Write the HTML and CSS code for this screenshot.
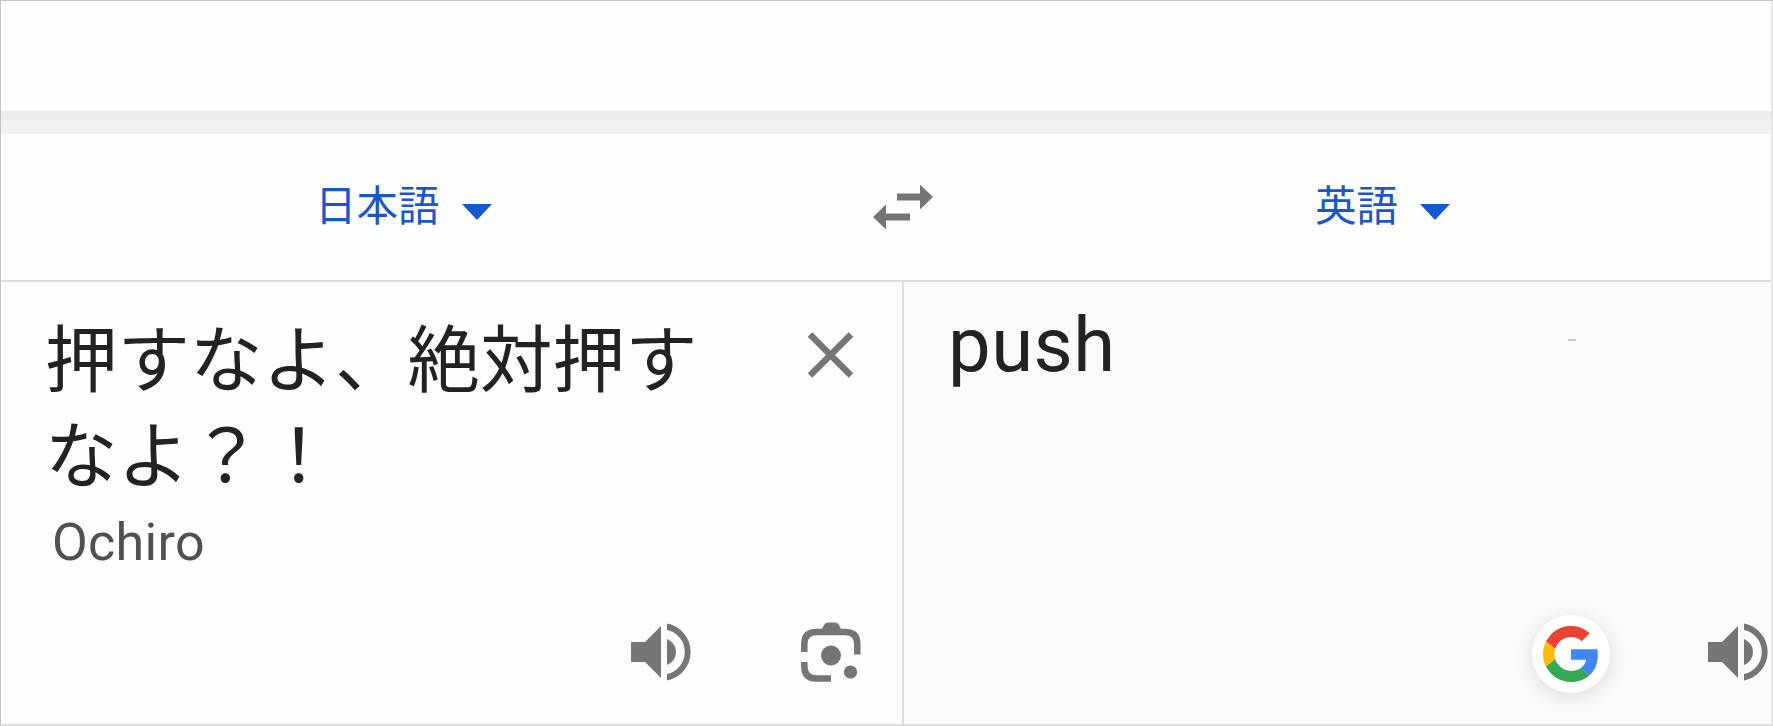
FILE: index.html
```html
<!DOCTYPE html>
<html lang="ja">
<head>
    <meta charset="UTF-8">
    <meta name="viewport" content="width=device-width, initial-scale=1.0">
    <title>翻訳</title>
    <link rel="stylesheet" href="styles.css">
</head>
<body>
    <div class="page">
        <div class="top-space"></div>
        <div class="band"></div>

        <div class="languages">
            <div class="language source-language">
                <span>日本語</span>
                <svg class="arrow" viewBox="0 0 30 16"><path d="M0 0h30L15 16z"/></svg>
            </div>
            <svg class="swap" viewBox="0 0 60 46">
                <path d="M24 9.500h23V.5l13 12.500-13 12.500v-9H24zM37 29.500H13v-9L0 33l13 12.500v-9h24z"/>
            </svg>
            <div class="language target-language">
                <span>英語</span>
                <svg class="arrow" viewBox="0 0 30 16"><path d="M0 0h30L15 16z"/></svg>
            </div>
        </div>

        <div class="panels">
            <div class="panel source">
                <div class="source-row">
                    <div class="source-text">押すなよ、絶対押すなよ？！</div>
                    <svg class="close" viewBox="0 0 46 46"><path d="M2.500 2.500l41 41M43.500 2.500l-41 41"/></svg>
                </div>
                <div class="reading">Ochiro</div>
                <div class="actions">
                    <svg class="speaker" viewBox="0 0 60 58">
                        <path d="M0 19h14L30 3v52L14 39H0zM36 16q9 4 9 13t-9 13z"/>
                        <path d="M36 .5a29 29 0 0 1 0 57v-6.500a22.500 22.500 0 0 0 0-44z"/>
                    </svg>
                    <svg class="lens" viewBox="0 0 60 60">
                        <path class="frame" d="M3.300 30v-8q0-12 12-12h29q12 0 12 12v10.500M3.300 40v4q0 12.500 12 12.500h14.700"/>
                        <path d="M20 9l3-6q1-2.500 4-2.500h7q3 0 4 2.500l3 6z"/>
                        <circle cx="30" cy="33.500" r="10"/>
                        <circle cx="49.500" cy="50" r="6.600"/>
                    </svg>
                </div>
            </div>
            <div class="panel target">
                <div class="target-text">push</div>
                <span class="mark"></span>
                <div class="actions">
                    <div class="google">
                        <svg viewBox="0 0 48 48">
                            <path fill="#ea4335" d="M24 9.500c3.540 0 6.710 1.220 9.210 3.600l6.850-6.850C35.900 2.380 30.470 0 24 0 14.620 0 6.510 5.380 2.560 13.220l7.980 6.190C12.430 13.720 17.740 9.500 24 9.500z"/>
                            <path fill="#4285f4" d="M46.980 24.550c0-1.570-.15-3.090-.38-4.550H24v9.020h12.940c-.58 2.960-2.260 5.480-4.780 7.180l7.730 6c4.510-4.180 7.090-10.360 7.090-17.650z"/>
                            <path fill="#fbbc05" d="M10.530 28.590c-.48-1.450-.76-2.990-.76-4.590s.27-3.140.76-4.590l-7.980-6.190C.92 16.460 0 20.120 0 24c0 3.880.92 7.540 2.560 10.780l7.970-6.190z"/>
                            <path fill="#34a853" d="M24 48c6.480 0 11.930-2.130 15.890-5.810l-7.730-6c-2.150 1.450-4.920 2.300-8.160 2.300-6.260 0-11.570-4.220-13.470-9.910l-7.980 6.190C6.510 42.620 14.620 48 24 48z"/>
                        </svg>
                    </div>
                    <svg class="speaker" viewBox="0 0 60 58">
                        <path d="M0 19h14L30 3v52L14 39H0zM36 16q9 4 9 13t-9 13z"/>
                        <path d="M36 .5a29 29 0 0 1 0 57v-6.500a22.500 22.500 0 0 0 0-44z"/>
                    </svg>
                </div>
            </div>
        </div>
    </div>
</body>
</html>
```
FILE: styles.css
```css
* {
    box-sizing: border-box;
}
body {
    margin: 0;
    background-color: #fefefe;
    font-family: Roboto, "Noto Sans CJK JP", sans-serif;
    color: #222;
}
svg {
    display: block;
    flex: none;
    fill: #757575;
}
.page {
    display: flex;
    flex-direction: column;
    height: 726px;
    overflow: hidden;
    border: 1px solid #c4c4c4;
    border-right: 2px solid #e4e5e6;
    border-bottom: 2px solid #dcdddd;
}
.top-space {
    height: 110px;
}
.band {
    height: 23px;
    background: linear-gradient(#e9eaeb, #edeeef 35%, #f1f2f4 55%, #f0f1f3);
}
.languages {
    display: flex;
    align-items: center;
    height: 148px;
    border-bottom: 2px solid #dcdddd;
}
.language {
    display: flex;
    align-items: center;
    color: #1b57c4;
    font-size: 41.500px;
    line-height: 60px;
}
.source-language {
    width: 872px;
    padding-left: 314px;
}
.target-language {
    padding-left: 382px;
}
.arrow {
    width: 30px;
    height: 16px;
    margin: 10px 0 0 22px;
    fill: #1558d0;
}
.swap {
    width: 60px;
    height: 46px;
}
.panels {
    display: flex;
    flex: 1;
}
.panel {
    display: flex;
    flex-direction: column;
}
.source {
    width: 903px;
    padding-left: 44px;
    border-right: 2px solid #dcdddd;
}
.source-row {
    display: flex;
    align-items: flex-start;
}
.source-text {
    width: 762px;
    padding: 25px 90px 0 0;
    font-family: "Noto Sans CJK JP", sans-serif;
    font-size: 72.500px;
    line-height: 96px;
}
.close {
    width: 47px;
    height: 46px;
    margin-top: 50px;
    fill: none;
    stroke: #757575;
    stroke-width: 6.500;
}
.reading {
    padding-left: 7px;
    margin-top: 14px;
    color: #505050;
    font-size: 52px;
    line-height: 60px;
    letter-spacing: 0.300px;
}
.actions {
    display: flex;
    align-items: center;
    height: 78px;
    margin-top: auto;
    margin-bottom: 31px;
}
.source .actions {
    padding-left: 586px;
}
.speaker {
    width: 60px;
    height: 58px;
    margin-bottom: 5px;
}
.lens {
    width: 60px;
    height: 60px;
    margin: 0 0 5px 110px;
}
.frame {
    fill: none;
    stroke: #757575;
    stroke-width: 6.500;
}
.target {
    flex: 1;
    background-color: #f8fafc;
}
.target-text {
    padding: 18px 0 0 44px;
    font-size: 76px;
    line-height: 90px;
    letter-spacing: 0.500px;
}
.mark {
    width: 8px;
    height: 2px;
    margin: -51px 0 0 664px;
    background-color: #c9cacb;
}
.target .actions {
    padding-left: 628px;
}
.google {
    display: flex;
    align-items: center;
    justify-content: center;
    width: 78px;
    height: 78px;
    margin-right: 98px;
    border-radius: 50%;
    background-color: #fff;
    box-shadow: 0 4px 20px rgba(0, 0, 0, 0.12);
}
.google svg {
    width: 56px;
    height: 56px;
}
```
